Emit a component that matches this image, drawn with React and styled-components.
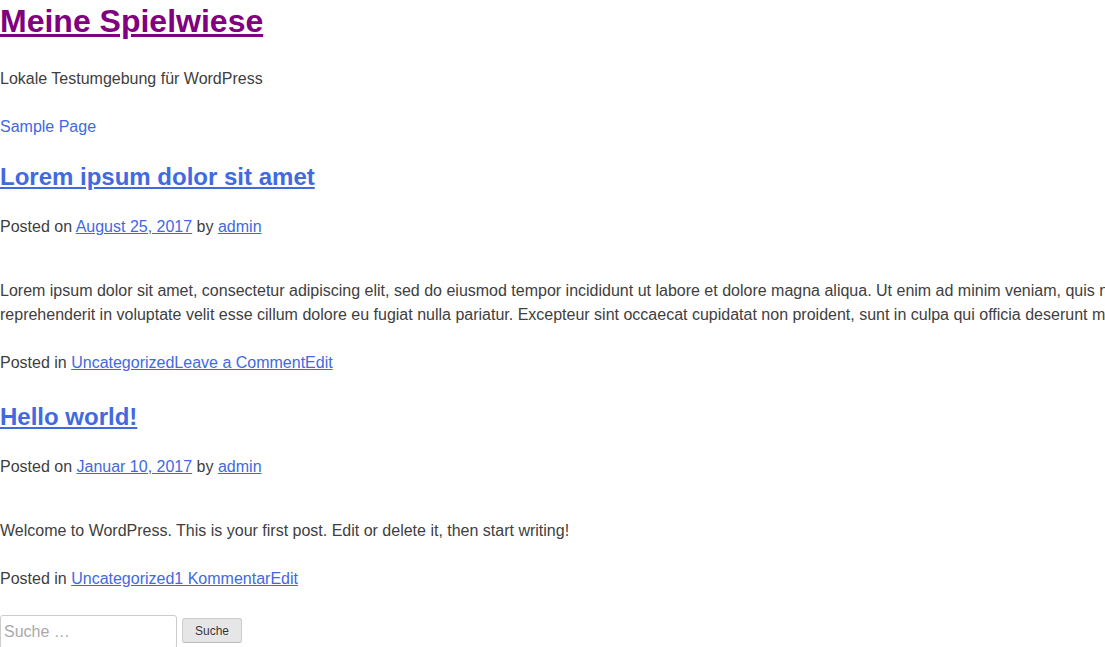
import React from "react";
import styled, { createGlobalStyle } from "styled-components";

const Global = createGlobalStyle`
  html, body { margin: 0; padding: 0; overflow: hidden; background: #fff; }
  body {
    font-family: "Liberation Sans", Arial, sans-serif;
    font-size: 16px;
    line-height: 1.5;
    color: #404040;
  }
`;

const Page = styled.div`
  display: flex;
  flex-direction: column;
  align-items: flex-start;
`;

const Link = styled.a`
  color: ${(p) => (p.$visited ? "#800080" : "#4169e1")};
  text-decoration: ${(p) => (p.$plain ? "none" : "underline")};
`;

const SiteTitle = styled.h1`
  margin: 0 0 25px;
  font-size: 32px;
  font-weight: bold;
  line-height: 42px;
`;

const Text = styled.p`
  margin: 0 0 24px;
  white-space: nowrap;
`;

const Nav = styled.nav`
  margin: 0 0 20px;
`;

const Article = styled.article`
  display: flex;
  flex-direction: column;
  margin-bottom: 24px;
`;

const EntryTitle = styled.h2`
  margin: 0 0 20px;
  font-size: 24px;
  font-weight: bold;
  line-height: 36px;
`;

const Meta = styled.div`
  margin-bottom: 40px;
`;

const Content = styled.div`
  display: flex;
  flex-direction: column;
`;

const Footer = styled.footer``;

const SearchForm = styled.form`
  display: flex;
  align-items: flex-start;
  gap: 5px;
`;

const SearchInput = styled.input`
  box-sizing: border-box;
  width: 177px;
  height: 34px;
  margin: 0;
  padding: 3px;
  border: 1px solid #ccc;
  border-radius: 3px;
  font-family: "Liberation Sans", Arial, sans-serif;
  font-size: 16px;
  color: #666;
  &::placeholder { color: #a9a9a9; }
`;

const SearchButton = styled.button`
  margin-top: 3px;
  box-sizing: border-box;
  height: 25px;
  padding: 0 12px;
  border: 1px solid;
  border-color: #ccc #ccc #bbb;
  border-radius: 3px;
  background: #e6e6e6;
  color: rgba(0, 0, 0, 0.8);
  font-family: "Liberation Sans", Arial, sans-serif;
  font-size: 12px;
  line-height: 1;
`;

function Post({ title, date, content, footerLinks }) {
  return (
    <Article>
      <EntryTitle>
        <Link href="#">{title}</Link>
      </EntryTitle>
      <Meta>
        Posted on <Link href="#">{date}</Link> by <Link href="#">admin</Link>
      </Meta>
      <Content>{content}</Content>
      <Footer>
        Posted in{" "}
        {footerLinks.map((l) => (
          <Link key={l} href="#">{l}</Link>
        ))}
      </Footer>
    </Article>
  );
}

export default function App() {
  return (
    <Page>
      <Global />
      <SiteTitle>
        <Link href="#" $visited>Meine Spielwiese</Link>
      </SiteTitle>
      <Text>Lokale Testumgebung für WordPress</Text>
      <Nav>
        <Link href="#" $plain>Sample Page</Link>
      </Nav>
      <Post
        title="Lorem ipsum dolor sit amet"
        date="August 25, 2017"
        footerLinks={["Uncategorized", "Leave a Comment", "Edit"]}
        content={
          <Text>
            Lorem ipsum dolor sit amet, consectetur adipiscing elit, sed do eiusmod tempor incididunt ut labore et dolore magna aliqua. Ut enim ad minim veniam, quis nostrud exercitation ullamco laboris nisi ut aliquip ex ea commodo consequat. Duis aute irure dolor in
            <br />
            reprehenderit in voluptate velit esse cillum dolore eu fugiat nulla pariatur. Excepteur sint occaecat cupidatat non proident, sunt in culpa qui officia deserunt mollit anim id est laborum.
          </Text>
        }
      />
      <Post
        title="Hello world!"
        date="Januar 10, 2017"
        footerLinks={["Uncategorized", "1 Kommentar", "Edit"]}
        content={<Text>Welcome to WordPress. This is your first post. Edit or delete it, then start writing!</Text>}
      />
      <SearchForm onSubmit={(e) => e.preventDefault()}>
        <SearchInput type="search" placeholder="Suche …" />
        <SearchButton type="submit">Suche</SearchButton>
      </SearchForm>
    </Page>
  );
}
